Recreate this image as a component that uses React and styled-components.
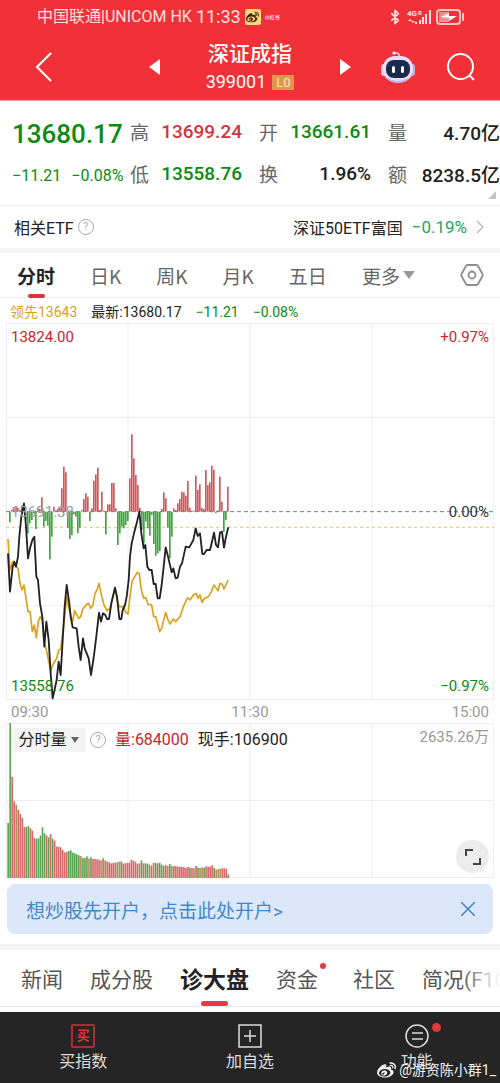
import React from "react";
import styled, { createGlobalStyle } from "styled-components";
import { Bluetooth } from "lucide-react";
import { FaWeibo } from "react-icons/fa";

const RED = "#c9252d";
const GREEN = "#0c8a12";

const GlobalStyle = createGlobalStyle`
    * {
        box-sizing: border-box;
    }

    body {
        margin: 0;
        background: #fff;
        color: #222;
        font-family: Roboto, "Noto Sans CJK SC", sans-serif;
    }

    button {
        margin: 0;
        padding: 0;
        border: 0;
        background: none;
        color: inherit;
        font: inherit;
        cursor: pointer;
    }

    a {
        color: inherit;
        text-decoration: none;
    }

    svg {
        display: block;
    }
`;

// one value per minute, above zero is drawn red, below zero green
const strength = [
    0, -32, 6, 10, 15, 12, 5, 18, 8, -25, -65, -35, -25, -5, -52, 12, 8, 43, -45, -28,
    -42, -143, -75, 15, 4, 8, 12, 70, 135, 118, -48, -82, -70, -8, -15, -65, -48, 5, 38, 55,
    45, -28, 10, 93, 112, 132, 5, 60, 3, -68, 22, 22, 86, 86, 10, -100, -65, -45, -50,
    -40, -28, 100, 232, 160, 110, 80, 12, -55, -95, -30, -50, -72, -10, -97, -132, -125, -118, 8, 58,
    40, -48, -140, -75, 10, 5, 25, 38, 60, 58, 48, 92, 12, 3, 3, 108, 65, 82, 12, 8,
    125, 80, 88, 138, 126, -4, 4, 105, 30, -60, -25, 75,
];

const price = "24,400 30,515 38,440 43,425 48,440 54,410 58,350 64,290 72,250 78,320 84,415 90,385 97,360 103,350 109,470 114,480 120,550 127,590 133,680 139,605 146,660 152,760 158,835 170,780 176,725 182,765 188,660 194,560 200,495 208,550 212,590 218,622 230,625 236,680 242,720 249,655 254,685 260,700 266,715 273,765 280,720 284,690 290,640 297,578 303,605 309,580 316,585 321,597 327,597 334,550 345,503 351,530 358,597 364,597 368,570 375,555 380,530 386,480 390,410 395,370 402,340 410,310 418,275 424,340 431,385 436,375 442,440 448,450 455,450 461,492 467,492 473,535 479,535 485,495 491,440 497,382 503,405 515,457 520,445 527,475 533,473 540,440 546,430 557,380 568,382 580,360 587,325 593,348 600,340 607,402 612,402 620,390 630,390 636,365 642,338 648,375 654,382 660,338 666,335 672,383 678,350 685,322";

const average = "24,357 30,450 38,425 48,440 54,445 60,490 66,510 72,495 78,535 84,575 90,575 97,635 103,615 109,653 115,605 121,590 127,600 133,670 139,690 152,752 158,735 164,725 170,715 176,690 182,687 188,640 194,590 200,530 205,560 212,585 218,605 224,572 236,595 242,590 248,568 260,553 266,550 272,565 279,555 285,520 291,510 297,490 303,520 312,555 321,572 330,565 345,503 351,540 358,560 370,560 376,575 384,582 390,530 396,485 404,470 412,457 418,462 424,510 431,535 437,532 444,553 455,555 461,590 467,590 479,635 485,625 497,577 503,597 510,612 520,597 527,605 540,590 550,560 563,533 570,540 580,525 588,520 594,535 600,525 606,547 614,535 625,530 634,515 642,495 654,512 660,490 666,492 672,507 684,480";

const volume = [
    165, 465, 303, 230, 220, 205, 192, 180, 153, 153, 156, 149, 142, 120, 118, 119, 127, 152, 134, 128,
    122, 132, 118, 112, 94, 93, 92, 84, 77, 78, 81, 83, 76, 74, 71, 68, 66, 60, 60, 65,
    58, 62, 57, 57, 56, 55, 53, 59, 53, 50, 47, 44, 45, 46, 47, 49, 50, 44, 44, 45,
    46, 55, 52, 49, 43, 44, 53, 44, 44, 43, 40, 37, 46, 46, 44, 46, 40, 36, 39, 36,
    42, 37, 35, 36, 34, 34, 33, 32, 30, 33, 31, 30, 29, 36, 32, 30, 32, 31, 35, 34,
    34, 38, 30, 25, 27, 28, 29, 29, 28, 11,
];
const volumeSide = "ggrrtrrrrggrrrgggggrgrgrrrrrrrggggggtgggtgrrrrtrttrrrrttgrrrrrrrrtgrggtrtgrggrrtgtrrtrrrrrgrtrgttgrrrrgtttrrrg";
const sideColor = { g: "#5ba552", r: "#d9686a", t: "#b58c5c" };

const chartTabs = ["分时", "日K", "周K", "月K", "五日"];

const stats = [
    { label: "高", value: "13699.24", color: "#cf363b" },
    { label: "开", value: "13661.61", color: GREEN },
    { label: "量", value: "4.70亿" },
    { label: "低", value: "13558.76", color: GREEN },
    { label: "换", value: "1.96%" },
    { label: "额", value: "8238.5亿" },
];

const newsTabs = [
    { label: "新闻" },
    { label: "成分股" },
    { label: "诊大盘", active: true },
    { label: "资金", dot: true },
    { label: "社区" },
    { label: "简况(F10)" },
];

function Grid({ height, rows }) {
    const lines = [];
    for (let i = 0; i <= rows; i++) {
        // the zero line has its own dashes
        if (rows === 4 && i === 2) continue;
        const y = Math.min(Math.max((height / rows) * i, 1), height - 1);
        lines.push(<path key={"h" + i} d={`M0 ${y}H1464`} />);
    }
    for (let i = 0; i <= 4; i++) {
        const x = Math.min(Math.max(366 * i, 1), 1463);
        lines.push(<path key={"v" + i} d={`M${x} 0V${height}`} />);
    }
    return <g stroke="#ececee" strokeWidth="3">{lines}</g>;
}

function PriceChart() {
    return (
        <PriceBox>
            <svg width="100%" height="100%" viewBox="0 0 1464 1131" preserveAspectRatio="none" aria-hidden="true">
                <Grid height={1131} rows={4} />
                <path d="M0 566H1464" stroke="#77779a" strokeWidth="3" strokeDasharray="12 9" />
                <path d="M0 613H1464" stroke="#e2c67a" strokeWidth="3" strokeDasharray="9 9" />
                <g transform="translate(-18 291)">
                    {strength.map((v, i) => (
                        <rect
                            key={i}
                            x={21 + i * 6}
                            y={v > 0 ? 275 - v : 275}
                            width="5"
                            height={Math.abs(v)}
                            fill={v > 0 ? "#d2585c" : "#3ea63b"}
                        />
                    ))}
                    <polyline points={average} fill="none" stroke="#d9a21c" strokeWidth="5" strokeLinejoin="round" />
                    <polyline points={price} fill="none" stroke="#222" strokeWidth="5.5" strokeLinejoin="round" />
                </g>
            </svg>
            <Labels>
                <Row><Tag $color={RED}>13824.00</Tag><Tag $color={RED}>+0.97%</Tag></Row>
                <Row><Tag $color="#9b9b9b">13691.38</Tag><Tag $color="#333">0.00%</Tag></Row>
                <Row><Tag $color={GREEN}>13558.76</Tag><Tag $color={GREEN}>−0.97%</Tag></Row>
            </Labels>
        </PriceBox>
    );
}

function VolumeChart() {
    return (
        <VolumeBox>
            <svg width="100%" height="100%" viewBox="0 0 1464 465" preserveAspectRatio="none" aria-hidden="true">
                <Grid height={465} rows={2} />
                {volume.map((v, i) => (
                    <rect
                        key={i}
                        x={4 + i * 6.06}
                        y={465 - v}
                        width="5"
                        height={v}
                        fill={sideColor[volumeSide[i]]}
                    />
                ))}
            </svg>
            <VolumeHead>
                <Picker type="button">分时量<Caret $size={4} $color="#666" /></Picker>
                <Help type="button" aria-label="说明">?</Help>
                <Figure $color={RED}>量:684000</Figure>
                <Figure>现手:106900</Figure>
                <Peak>2635.26万</Peak>
            </VolumeHead>
            <Expand type="button" aria-label="全屏">
                <svg width="18" height="18" viewBox="0 0 18 18" fill="none" stroke="#444" strokeWidth="2">
                    <path d="M2 8V2h7M16 10v6H9" />
                </svg>
            </Expand>
        </VolumeBox>
    );
}

function Robot() {
    return (
        <svg width="34" height="32" viewBox="0 0 34 32">
            <path d="M18 7V4q0-2-4-2" fill="none" stroke="#f6cfe2" strokeWidth="1.5" />
            <circle cx="13" cy="2" r="1.6" fill="#fff" />
            <rect x="0" y="13" width="6" height="12" rx="3" fill="#d7c8f4" />
            <rect x="28" y="13" width="6" height="12" rx="3" fill="#b6b1ee" />
            <rect x="2" y="5" width="30" height="26" rx="12" fill="#eadcf8" />
            <path d="M5 26q12 8 24 0-4 6-12 6t-12-6" fill="#bdb6f2" />
            <rect x="5" y="9" width="24" height="18" rx="8" fill="#192b4d" />
            <rect x="11" y="15" width="3" height="7" rx="1.5" fill="#fff" />
            <rect x="20" y="15" width="3" height="7" rx="1.5" fill="#fff" />
        </svg>
    );
}

export default function App() {
    return (
        <>
            <GlobalStyle />
            <Page>
                <Header>
                    <StatusBar>
                        <span>中国联通|UNICOM HK</span>
                        <Clock>11:33</Clock>
                        <WeiboBadge><FaWeibo size={13} /></WeiboBadge>
                        <RedNote>小红书</RedNote>
                        <Signals>
                            <Bluetooth size={16} strokeWidth={2.5} />
                            <svg width="25" height="16" viewBox="0 0 25 16" fill="#ffe4e4">
                                <text x="0" y="7" fontSize="8" fontWeight="700">4G</text>
                                <text x="11" y="6" fontSize="6" fontWeight="700">R</text>
                                <path d="M1 12l2-2 2 2zM4 12l2 2 2-2zM8 13h2v2H8zM12 11h2v4h-2zM15 8h2v7h-2zM18 5h2v10h-2zM22 1h2v14h-2z" />
                            </svg>
                            <svg width="29" height="16" viewBox="0 0 29 16">
                                <rect x="1" y="1" width="23" height="14" rx="3" fill="none" stroke="#ffc6c6" strokeWidth="2" />
                                <rect x="3" y="3" width="10" height="10" fill="#fb8a8e" />
                                <path d="M5 8l8-4v3h8l-8 5V9z" fill="#fff" />
                                <rect x="26" y="4" width="2" height="8" rx="1" fill="#ffc6c6" />
                            </svg>
                        </Signals>
                    </StatusBar>
                    <Nav>
                        <Back type="button" aria-label="返回">
                            <svg width="18" height="30" viewBox="0 0 18 30" fill="none" stroke="#fff" strokeWidth="2.2">
                                <path d="M16 1L2 15l14 14" />
                            </svg>
                        </Back>
                        <Switcher>
                            <button type="button" aria-label="上一个">
                                <svg width="12" height="16" viewBox="0 0 12 16" fill="#fff"><path d="M11 0v16L0 8z" /></svg>
                            </button>
                            <Title>
                                <h1>深证成指</h1>
                                <Code>399001<Level>L0</Level></Code>
                            </Title>
                            <button type="button" aria-label="下一个">
                                <svg width="12" height="16" viewBox="0 0 12 16" fill="#fff"><path d="M1 0v16l11-8z" /></svg>
                            </button>
                        </Switcher>
                        <Tools>
                            <button type="button" aria-label="助手"><Robot /></button>
                            <button type="button" aria-label="搜索">
                                <svg width="28" height="28" viewBox="0 0 28 28" fill="none" stroke="#fff" strokeWidth="2">
                                    <circle cx="13.5" cy="13.5" r="12.5" />
                                    <path d="M22 22l5 5" />
                                </svg>
                            </button>
                        </Tools>
                    </Nav>
                </Header>

                <Quote>
                    <Current>
                        <Price>13680.17</Price>
                        <Change><span>−11.21</span><span>−0.08%</span></Change>
                    </Current>
                    <Stats>
                        {stats.map((s) => (
                            <Stat key={s.label} $color={s.color}>
                                <span>{s.label}</span>
                                <strong>{s.value}</strong>
                            </Stat>
                        ))}
                    </Stats>
                    <Corner />
                </Quote>

                <EtfRow>
                    <span>相关ETF</span>
                    <Help type="button" aria-label="ETF说明">?</Help>
                    <EtfLink href="#etf">
                        深证50ETF富国
                        <em>−0.19%</em>
                        <svg width="8" height="14" viewBox="0 0 8 14" fill="none" stroke="#bbb" strokeWidth="1.5">
                            <path d="M1 1l6 6-6 6" />
                        </svg>
                    </EtfLink>
                </EtfRow>

                <ChartTabs>
                    {chartTabs.map((t, i) => (
                        <ChartTab key={t} type="button" $active={i === 0}>{t}</ChartTab>
                    ))}
                    <ChartTab type="button">更多<Caret $size={6} $color="#999" /></ChartTab>
                    <Settings type="button" aria-label="设置">
                        <svg width="24" height="24" viewBox="0 0 24 24" fill="none" stroke="#8d8d8d" strokeWidth="1.8">
                            <path d="M7.500 2h9q1 0 1.500 1l4.500 8q.5 1 0 2L18 21q-.5 1-1.500 1h-9q-1 0-1.500-1l-4.500-8q-.5-1 0-2L6 3q.5-1 1.500-1z" />
                            <circle cx="12" cy="12" r="3.5" />
                        </svg>
                    </Settings>
                </ChartTabs>

                <Legend>
                    <Figure $color="#d6a21e">领先13643</Figure>
                    <Figure>最新:13680.17</Figure>
                    <Figure $color={GREEN}>−11.21</Figure>
                    <Figure $color={GREEN}>−0.08%</Figure>
                </Legend>

                <PriceChart />
                <TimeAxis>
                    <span>09:30</span>
                    <span>11:30</span>
                    <span>15:00</span>
                </TimeAxis>
                <VolumeChart />

                <Banner>
                    <a href="#open">想炒股先开户，点击此处开户&gt;</a>
                    <button type="button" aria-label="关闭">
                        <svg width="14" height="14" viewBox="0 0 14 14" stroke="#3d82c8" strokeWidth="1.5">
                            <path d="M0 0l14 14M14 0L0 14" />
                        </svg>
                    </button>
                </Banner>

                <NewsTabs>
                    {newsTabs.map((t) => (
                        <NewsTab key={t.label} type="button" $active={t.active} $dot={t.dot}>{t.label}</NewsTab>
                    ))}
                </NewsTabs>

                <Footer>
                    <Action type="button">
                        <BuyIcon aria-hidden="true">买</BuyIcon>
                        买指数
                    </Action>
                    <Action type="button">
                        <svg width="24" height="24" viewBox="0 0 24 24" fill="none" stroke="#ddd" strokeWidth="1.5">
                            <path d="M1 1h22v22H1zM12 6v12M6 12h12" />
                        </svg>
                        加自选
                    </Action>
                    <Action type="button" $dot>
                        <svg width="24" height="24" viewBox="0 0 24 24" fill="none" stroke="#ddd" strokeWidth="1.5">
                            <circle cx="12" cy="12" r="11" />
                            <path d="M7 9h11M7 15h11" />
                        </svg>
                        功能
                    </Action>
                    <Watermark><FaWeibo size={19} />@游资陈小群1_</Watermark>
                </Footer>
            </Page>
        </>
    );
}

const Page = styled.main`
    width: 100%;
    overflow: hidden;
`;

const Header = styled.header`
    height: 101px;
    background: #f23037;
    border-bottom: 1px solid #f5a0a2;
    color: #fff;
`;

const StatusBar = styled.div`
    display: flex;
    align-items: center;
    height: 34px;
    padding: 0 35px 0 37px;
    color: #ffe0e0;
    font-size: 16px;
    line-height: 24px;
`;

const Clock = styled.span`
    margin-left: 4px;
    font-size: 18px;
`;

const WeiboBadge = styled.span`
    display: flex;
    align-items: center;
    justify-content: center;
    width: 16px;
    height: 16px;
    margin-left: 4px;
    background: #fbd77a;
    border-radius: 2px;
    color: #4a1c14;
`;

const RedNote = styled.span`
    margin-left: 4px;
    font-size: 5px;
    font-weight: 700;
    line-height: 8px;
`;

const Signals = styled.div`
    display: flex;
    align-items: center;
    gap: 4px;
    margin-left: auto;
`;

const Nav = styled.nav`
    display: grid;
    grid-template-columns: 1fr 202px 1fr;
    align-items: center;
    height: 66px;
    padding: 0 25px;
`;

const Back = styled.button`
    justify-self: start;
    padding-left: 10px;
`;

const Switcher = styled.div`
    display: flex;
    align-items: center;
    justify-content: space-between;
`;

const Title = styled.div`
    text-align: center;

    h1 {
        margin: 0;
        font-size: 21px;
        font-weight: 500;
        line-height: 30px;
    }
`;

const Code = styled.div`
    display: flex;
    align-items: center;
    gap: 6px;
    font-size: 18px;
    line-height: 26px;
`;

const Level = styled.span`
    width: 22px;
    background: #e3964a;
    color: #ffe9c4;
    font-size: 13px;
    line-height: 15px;
`;

const Tools = styled.div`
    display: flex;
    align-items: center;
    justify-content: flex-end;
    gap: 32px;
`;

const Quote = styled.section`
    position: relative;
    display: flex;
    height: 105px;
    padding: 9px 0 0 12px;
    border-bottom: 1px solid #f0f0f0;
`;

const Current = styled.div`
    width: 118px;
    color: ${GREEN};
`;

const Price = styled.div`
    font-size: 26px;
    font-weight: 500;
    line-height: 48px;
`;

const Change = styled.div`
    display: flex;
    gap: 10px;
    font-size: 16px;
    line-height: 36px;
`;

const Stats = styled.div`
    flex: 1;
    display: grid;
    grid-template-columns: repeat(3, 1fr);
    grid-auto-rows: 42px;
    column-gap: 17px;
`;

const Stat = styled.div`
    display: flex;
    align-items: center;
    justify-content: space-between;
    color: #666;
    font-size: 19px;
    white-space: nowrap;

    strong {
        color: ${(props) => props.$color || "#222"};
        font-weight: 500;
    }
`;

const Corner = styled.i`
    position: absolute;
    right: 4px;
    bottom: 6px;
    border-left: 8px solid transparent;
    border-bottom: 8px solid #c4c4c4;
`;

const EtfRow = styled.section`
    display: flex;
    align-items: center;
    gap: 4px;
    height: 42px;
    padding: 0 16px 0 14px;
    font-size: 16px;
`;

const Help = styled.button`
    width: 16px;
    height: 16px;
    border: 1px solid #aaa;
    border-radius: 50%;
    color: #aaa;
    font-size: 11px;
    line-height: 14px;
`;

const EtfLink = styled.a`
    display: flex;
    align-items: center;
    gap: 9px;
    margin-left: auto;

    em {
        color: #25a162;
        font-size: 17px;
        font-style: normal;
    }
`;

const ChartTabs = styled.nav`
    display: flex;
    gap: 35px;
    height: 50px;
    padding: 0 16px 0 17px;
    border-top: 5px solid #f4f4f4;
    border-bottom: 1px solid #ececec;
`;

const ChartTab = styled.button`
    position: relative;
    display: flex;
    align-items: center;
    gap: 3px;
    color: ${(props) => (props.$active ? "#222" : "#666")};
    font-family: "Noto Sans CJK SC", sans-serif;
    font-size: 19px;
    font-weight: ${(props) => (props.$active ? 700 : 400)};
    white-space: nowrap;

    &::after {
        content: "";
        display: ${(props) => (props.$active ? "block" : "none")};
        position: absolute;
        left: 50%;
        bottom: -1px;
        width: 17px;
        height: 4px;
        margin-left: -8px;
        border-radius: 2px;
        background: #d9343a;
    }
`;

const Caret = styled.i`
    border: ${(props) => props.$size}px solid transparent;
    border-top: ${(props) => props.$size + 2}px solid ${(props) => props.$color};
    border-bottom: 0;
`;

const Settings = styled.button`
    margin-left: auto;
`;

const Legend = styled.div`
    display: flex;
    gap: 14px;
    height: 25px;
    padding: 0 10px;
    font-size: 14px;
    line-height: 28px;
`;

const Figure = styled.span`
    color: ${(props) => props.$color || "#222"};
    white-space: nowrap;
`;

const PriceBox = styled.section`
    position: relative;
    height: 377px;
    margin: 0 6px;
`;

const Labels = styled.div`
    position: absolute;
    inset: 3px 5px;
    display: flex;
    flex-direction: column;
    justify-content: space-between;
    font-size: 15px;
    line-height: 22px;
`;

const Row = styled.div`
    display: flex;
    justify-content: space-between;
`;

const Tag = styled.span`
    color: ${(props) => props.$color};
`;

const TimeAxis = styled.div`
    display: flex;
    justify-content: space-between;
    height: 23px;
    padding: 0 11px;
    color: #999;
    font-size: 15px;
    line-height: 24px;
`;

const VolumeBox = styled.section`
    position: relative;
    height: 155px;
    margin: 0 6px;
`;

const VolumeHead = styled.div`
    position: absolute;
    inset: 5px 5px auto 5px;
    display: flex;
    align-items: center;
    font-size: 16px;
    line-height: 24px;

    ${Help} {
        margin: 0 9px 0 4px;
    }

    ${Figure} {
        margin-right: 9px;
    }
`;

const Picker = styled.button`
    display: flex;
    align-items: center;
    justify-content: center;
    gap: 4px;
    width: 75px;
    height: 24px;
    border-radius: 2px;
    background: #f4f4f4;
`;

const Peak = styled.span`
    margin-left: auto;
    color: #999;
    font-size: 15px;
    line-height: 18px;
    align-self: flex-start;
`;

const Expand = styled.button`
    position: absolute;
    right: 5px;
    bottom: 5px;
    display: flex;
    align-items: center;
    justify-content: center;
    width: 33px;
    height: 33px;
    border-radius: 50%;
    background: #ececec;
`;

const Banner = styled.aside`
    display: flex;
    align-items: center;
    justify-content: space-between;
    height: 50px;
    margin: 6px 7px 10px;
    padding: 0 18px 0 19px;
    border-radius: 8px;
    background: #dbe8fb;
    color: #4387cb;
    font-size: 19px;
`;

const NewsTabs = styled.nav`
    position: relative;
    display: flex;
    gap: 27px;
    height: 63px;
    margin-bottom: 5px;
    padding-left: 21px;
    border-top: 6px solid #f4f4f4;
    border-bottom: 1px solid #e8e8e8;

    &::after {
        content: "";
        position: absolute;
        top: 0;
        right: 0;
        width: 40px;
        height: 54px;
        background: linear-gradient(to right, rgba(255, 255, 255, 0), #fff);
    }
`;

const NewsTab = styled.button`
    position: relative;
    flex-shrink: 0;
    padding: 0 ${(props) => (props.$dot ? 8 : 0)}px 0 0;
    color: ${(props) => (props.$active ? "#222" : "#555")};
    font-size: ${(props) => (props.$active ? 23 : 21)}px;
    font-weight: ${(props) => (props.$active ? 700 : 400)};

    &::after {
        content: "";
        display: ${(props) => (props.$active || props.$dot ? "block" : "none")};
        position: absolute;
        right: ${(props) => (props.$dot ? "0" : "21px")};
        top: ${(props) => (props.$dot ? "13px" : "51px")};
        width: ${(props) => (props.$dot ? "6px" : "27px")};
        height: ${(props) => (props.$dot ? "6px" : "5px")};
        border-radius: 3px;
        background: #e43a3c;
    }
`;

const Footer = styled.footer`
    position: relative;
    display: grid;
    grid-template-columns: repeat(3, 1fr);
    height: 71px;
    background: #252525;
    color: #ddd;
`;

const Action = styled.button`
    position: relative;
    display: flex;
    flex-direction: column;
    align-items: center;
    padding-top: 12px;
    font-size: 16px;
    line-height: 28px;

    &::after {
        content: "";
        display: ${(props) => (props.$dot ? "block" : "none")};
        position: absolute;
        top: 11px;
        left: 50%;
        width: 9px;
        height: 9px;
        margin-left: 15px;
        border-radius: 50%;
        background: #e03a3c;
    }
`;

const BuyIcon = styled.span`
    width: 24px;
    height: 24px;
    border: 2px solid #b02a35;
    border-radius: 2px;
    color: #e0343e;
    font-size: 13px;
    font-weight: 700;
    line-height: 20px;
`;

const Watermark = styled.div`
    position: absolute;
    right: 4px;
    bottom: 3px;
    display: flex;
    align-items: center;
    gap: 3px;
    color: #f2f2f2;
    font-size: 14px;
    line-height: 20px;
`;
